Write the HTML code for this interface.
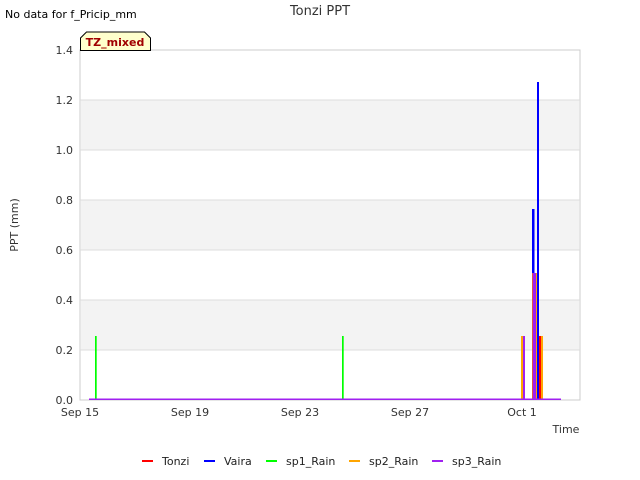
<!DOCTYPE html><html><head><style>body{margin:0;background:#fff}svg{display:block;font-family:"DejaVu Sans","Liberation Sans",sans-serif}</style></head><body>
<svg width="640" height="480" xmlns="http://www.w3.org/2000/svg">
<rect width="640" height="480" fill="#fff"/>
<rect x="80" y="50" width="500" height="350" fill="#fff" stroke="#ccc"/>
<rect x="81" y="100" width="498" height="50" fill="#f3f3f3"/>
<rect x="81" y="200" width="498" height="50" fill="#f3f3f3"/>
<rect x="81" y="300" width="498" height="50" fill="#f3f3f3"/>
<g stroke="#ddd" stroke-width="1">
<line x1="80" x2="580" y1="100" y2="100"/><line x1="80" x2="580" y1="150" y2="150"/><line x1="80" x2="580" y1="200" y2="200"/><line x1="80" x2="580" y1="250" y2="250"/><line x1="80" x2="580" y1="300" y2="300"/><line x1="80" x2="580" y1="350" y2="350"/></g>
<g font-size="11" fill="#333" text-anchor="end">
<text x="73" y="54">1.4</text><text x="73" y="104">1.2</text><text x="73" y="154">1.0</text><text x="73" y="204">0.8</text><text x="73" y="254">0.6</text><text x="73" y="304">0.4</text><text x="73" y="354">0.2</text><text x="73" y="404">0.0</text></g>
<g font-size="11" fill="#333" text-anchor="middle">
<text x="80" y="416">Sep 15</text><text x="190" y="416">Sep 19</text><text x="300" y="416">Sep 23</text><text x="410" y="416">Sep 27</text><text x="522" y="416">Oct 1</text></g>
<text x="566" y="433" font-size="11" fill="#333" text-anchor="middle">Time</text>
<text x="18" y="225" font-size="11" fill="#333" text-anchor="middle" transform="rotate(-90 18 225)">PPT (mm)</text>
<text x="320" y="15" font-size="13" fill="#333" text-anchor="middle">Tonzi PPT</text>
<text x="5" y="18" font-size="11" fill="#000">No data for f_Pricip_mm</text>
<path d="M80.5 50.5 V38 l6 -6 h58 l6 6 V50.5 Z" fill="#ffffcc" stroke="#000"/>
<text x="115" y="46" font-size="11" font-weight="bold" fill="#a00000" text-anchor="middle">TZ_mixed</text>
<rect x="95" y="336" width="1.7" height="64" fill="#00ff00"/>
<rect x="342" y="336" width="1.7" height="64" fill="#00ff00"/>
<rect x="521" y="336" width="2" height="64" fill="#ffa500"/>
<rect x="523" y="336" width="2" height="64" fill="#a020f0"/>
<rect x="532" y="209" width="2.5" height="191" fill="#0000ff"/>
<rect x="532" y="273" width="7" height="127" fill="#a020f0"/>
<rect x="532" y="273" width="1" height="127" fill="#e05050"/>
<rect x="536" y="273" width="1" height="127" fill="#ffa500"/>
<rect x="537" y="82" width="2" height="318" fill="#0000ff"/>
<rect x="539" y="336" width="2" height="64" fill="#ff0000"/>
<rect x="541" y="336" width="2" height="64" fill="#ffa500"/>
<rect x="89" y="398.5" width="472" height="1.5" fill="#a020f0"/>
<g font-size="11" fill="#222">
<rect x="142" y="460" width="11" height="2" fill="#ff0000"/><text x="162" y="465">Tonzi</text>
<rect x="204" y="460" width="11" height="2" fill="#0000ff"/><text x="224" y="465">Vaira</text>
<rect x="266" y="460" width="11" height="2" fill="#00ff00"/><text x="286" y="465">sp1_Rain</text>
<rect x="349" y="460" width="11" height="2" fill="#ffa500"/><text x="369" y="465">sp2_Rain</text>
<rect x="432" y="460" width="11" height="2" fill="#a020f0"/><text x="452" y="465">sp3_Rain</text>
</g>
</svg>
</body></html>
